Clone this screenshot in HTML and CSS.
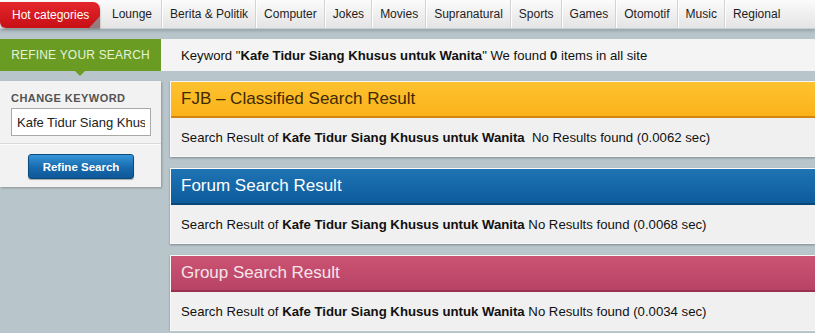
FILE: index.html
```html
<!DOCTYPE html>
<html>
<head>
<meta charset="utf-8">
<link rel="stylesheet" href="styles.css">
</head>
<body>
<nav class="topnav">
  <a class="hot">Hot categories</a>
  <a class="item">Lounge</a>
  <a class="item">Berita &amp; Politik</a>
  <a class="item">Computer</a>
  <a class="item">Jokes</a>
  <a class="item">Movies</a>
  <a class="item">Supranatural</a>
  <a class="item">Sports</a>
  <a class="item">Games</a>
  <a class="item">Otomotif</a>
  <a class="item">Music</a>
  <a class="item last">Regional</a>
</nav>
<div class="keyrow">
  <div class="refine-label">REFINE YOUR SEARCH</div>
  <div class="keybar">Keyword "<b>Kafe Tidur Siang Khusus untuk Wanita</b>" We found <b>0</b> items in all site</div>
</div>
<div class="main">
  <aside class="sidebar">
    <div class="side-top">
      <div class="side-title">CHANGE KEYWORD</div>
      <input class="kw-input" type="text" value="Kafe Tidur Siang Khusus untuk Wanita">
    </div>
    <div class="side-bottom">
      <button class="btn">Refine Search</button>
    </div>
  </aside>
  <section class="results">
    <div class="panel">
      <div class="phead fjb">FJB – Classified Search Result</div>
      <div class="pbody">Search Result of <b>Kafe Tidur Siang Khusus untuk Wanita</b>&nbsp; No Results found (0.0062 sec)</div>
    </div>
    <div class="panel">
      <div class="phead forum">Forum Search Result</div>
      <div class="pbody">Search Result of <b>Kafe Tidur Siang Khusus untuk Wanita</b> No Results found (0.0068 sec)</div>
    </div>
    <div class="panel">
      <div class="phead group">Group Search Result</div>
      <div class="pbody">Search Result of <b>Kafe Tidur Siang Khusus untuk Wanita</b> No Results found (0.0034 sec)</div>
    </div>
  </section>
</div>
</body>
</html>
```
FILE: styles.css
```css
* { box-sizing: border-box; }
html, body { margin: 0; padding: 0; }
body {
  background: #b8c5ca;
  font-family: "Liberation Sans", Arial, sans-serif;
  font-size: 13px;
  color: #1a1a1a;
  width: 815px;
  overflow: hidden;
}
.topnav {
  display: flex;
  align-items: stretch;
  height: 29px;
  background: linear-gradient(#fbfbfb, #e4e4e4);
  border-bottom: 1px solid #c9cfd2;
  box-shadow: 0 2px 3px rgba(90,110,118,0.35);
  font-size: 12px;
}
.topnav a {
  display: flex;
  align-items: center;
  color: #1e1e1e;
  white-space: nowrap;
}
.hot {
  position: relative;
  margin-top: 2px;
  padding: 0 8px 1px 12px;
  width: 100px;
  flex: none;
  color: #fff !important;
  background: linear-gradient(#e3262c, #c70f16);
  border-radius: 0 7px 0 6px;
  box-shadow: 0 1px 2px rgba(0,0,0,0.35);
}
.hot::after {
  content: "";
  position: absolute;
  right: 0;
  bottom: -1px;
  width: 0;
  height: 0;
  border-left: 12px solid transparent;
  border-bottom: 13px solid #8e8e8e;
  opacity: 0.85;
}
.item {
  padding: 0 7px 0 8px;
  border-left: 1px solid #d3d3d3;
  box-shadow: inset 1px 0 0 #fff;
}
.hot + .item { border-left: none; box-shadow: none; padding: 0 9px 0 12px; }

.keyrow {
  display: flex;
  margin-top: 10px;
  height: 32px;
}
.refine-label {
  position: relative;
  width: 161px;
  flex: none;
  background: #6a9c24;
  color: #e6f3d6;
  font-size: 12px;
  display: flex;
  align-items: center;
  justify-content: center;
  letter-spacing: 0.2px;
}
.refine-label::after {
  content: "";
  position: absolute;
  left: 75px;
  bottom: -5px;
  border-left: 5px solid transparent;
  border-right: 5px solid transparent;
  border-top: 5px solid #6a9c24;
}
.keybar {
  flex: 1;
  background: #f4f4f4;
  display: flex;
  align-items: center;
  padding-left: 20px;
  white-space: pre;
  color: #111;
  font-size: 13.15px;
}

.main {
  display: flex;
  align-items: flex-start;
  gap: 9px;
  margin-top: 10px;
}
.sidebar {
  width: 161px;
  flex: none;
  background: #f2f2f2;
  box-shadow: 1px 1px 2px rgba(0,0,0,0.25);
}
.side-top {
  padding: 11px 11px 7px 11px;
  border-bottom: 1px solid #dadada;
}
.side-title {
  font-size: 11px;
  font-weight: bold;
  color: #535353;
  letter-spacing: 0.45px;
  margin-bottom: 4px;
}
.kw-input {
  display: block;
  width: 140px;
  height: 28px;
  border: 1px solid #a9a9a9;
  background: #fff;
  font-family: "Liberation Sans", Arial, sans-serif;
  font-size: 13px;
  color: #222;
  padding: 0 5px;
  margin: 0;
  outline: none;
}
.side-bottom {
  display: flex;
  justify-content: center;
  padding: 9px 0 8px 1px;
  border-top: 1px solid #fbfbfb;
}
.btn {
  width: 106px;
  height: 25px;
  border: 1px solid #0b4a7d;
  border-radius: 3px;
  background: linear-gradient(#3695d8, #1769ad 55%, #0d5898);
  color: #fff;
  font-family: "Liberation Sans", Arial, sans-serif;
  font-weight: bold;
  font-size: 11.5px;
  padding: 0;
  box-shadow: 0 1px 1px rgba(0,0,0,0.3);
}

.results {
  flex: 1;
  display: flex;
  flex-direction: column;
  gap: 11px;
}
.panel {
  box-shadow: 0 1px 2px rgba(0,0,0,0.3);
  border: 1px solid #f8f8f8;
  border-right: none;
}
.phead {
  height: 36px;
  display: flex;
  align-items: center;
  padding-left: 10px;
  font-size: 17px;
}
.fjb {
  background: linear-gradient(#fdc22f, #fbb21b);
  border-bottom: 2px solid #d4850f;
  color: #3d2a00;
}
.forum {
  background: linear-gradient(#1f74b4, #0d5c9c);
  border-bottom: 2px solid #0a4778;
  color: #fff;
}
.group {
  background: linear-gradient(#cb5373, #b84364);
  border-bottom: 2px solid #98304f;
  color: #f7e4ea;
}
.pbody {
  height: 38px;
  display: flex;
  align-items: center;
  padding-left: 10px;
  background: #f0f0f0;
  white-space: pre;
  color: #111;
  font-size: 13.2px;
}
```
